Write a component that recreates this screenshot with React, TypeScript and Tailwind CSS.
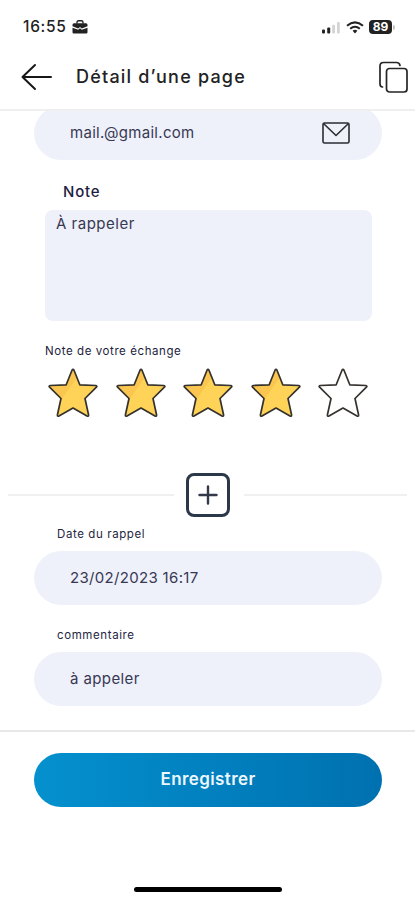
import React from 'react';

const STAR_PATH =
  'M24 2.2 Q25 0.6 26 2.2 L31.8 16.8 L47.8 17.500 Q49.600 18 48.400 19.200 L37 30.500 L40.600 47 Q40.600 48.800 39 48 L25 40 L11 48 Q9.400 48.800 9.400 47 L13 30.500 L1.600 19.200 Q0.400 18 2.200 17.500 L18.200 16.800 Z';

const Star: React.FC<{ filled: boolean }> = ({ filled }) => (
  <svg width="50" height="50" viewBox="0 0 50 50" fill="none">
    <path d={STAR_PATH} fill={filled ? '#fed358' : '#ffffff'} />
    {filled && <path d="M25 1.500 L28.500 10 L11 35 L13 30.500 L1.600 18.500 L18.200 16.800 Z" fill="#fbc650" />}
    <path d={STAR_PATH} stroke="#35322e" strokeWidth="1.7" strokeLinejoin="round" />
  </svg>
);

const StatusBar: React.FC = () => (
  <div className="flex h-[54px] items-center justify-between pl-[23px] pr-[20px]">
    <div className="flex items-center gap-[4px]">
      <span className="w-[45px] whitespace-nowrap text-[15.5px] font-medium tracking-[0.7px] text-[#222]">16:55</span>
      <svg width="16" height="14" viewBox="0 0 16 14" fill="#222">
        <path d="M5 3.5V2.3Q5 .8 6.5.8h3Q11 .8 11 2.3v1.2" fill="none" stroke="#222" strokeWidth="1.4" />
        <path d="M2 3.2h12q1.5 0 1.5 1.5v1.6L9.800 8.500 8 7 6.200 8.500.5 6.300V4.700Q.5 3.200 2 3.200Z" />
        <path d="M.5 7.700 6.200 9.700 8 8.300l1.800 1.400 5.700-2V12.200q0 1.300-1.300 1.300H1.800Q.5 13.500.5 12.200Z" />
      </svg>
    </div>
    <div className="flex items-center">
      <svg width="19" height="13" viewBox="0 0 19 13">
        <rect x="0" y="8.500" width="3" height="4" rx="1" fill="#222" />
        <rect x="5.200" y="6.500" width="3" height="6" rx="1" fill="#222" />
        <rect x="10.200" y="3.800" width="2.800" height="8.700" rx="1" fill="#d4d4d4" />
        <rect x="15" y="1" width="2.800" height="11.500" rx="1" fill="#d4d4d4" />
      </svg>
      <svg width="18" height="13" viewBox="0 0 18 13" fill="none" stroke="#222" strokeWidth="2" className="ml-[5px]">
        <path d="M1 4.700Q9-2 17 4.700" />
        <path d="M4.200 7.700Q9 3.800 13.800 7.700" />
        <path d="M6.600 9.700Q9 8 11.400 9.700L9 12.500Z" fill="#222" stroke="none" />
      </svg>
      <div className="ml-[5px] flex h-[14px] w-[23px] items-center justify-center rounded-[4px] bg-[#222] text-[12px] font-bold leading-none text-white">
        89
      </div>
      <div className="ml-px h-[5px] w-[2px] rounded-r-full bg-[#c4c4c4]" />
    </div>
  </div>
);

const Header: React.FC = () => (
  <header className="flex h-[57px] items-center border-b-2 border-[#efefef] pb-[10px] pl-[21px] pr-[7px]">
    <svg width="32" height="28" viewBox="0 0 32 28" fill="none" stroke="#171717" strokeWidth="2" strokeLinecap="round" strokeLinejoin="round">
      <path d="M30 14H1.500M14 2 1.500 14 14 26" />
    </svg>
    <h1 className="ml-[23px] flex-1 whitespace-nowrap text-[18px] font-medium leading-6 tracking-[1.2px] text-[#222]">Détail d’une page</h1>
    <svg width="30" height="34" viewBox="0 0 30 34" fill="none" stroke="#252525" strokeWidth="1.700" strokeLinecap="round">
      <path d="M4.500 27Q2 27 2 24V6Q2 2.500 5.500 2.500H18.500Q21.500 2.500 22 5.500" />
      <rect x="8.500" y="8.500" width="20.500" height="23.500" rx="3" />
    </svg>
  </header>
);

const Pill: React.FC<{ children: React.ReactNode }> = ({ children }) => (
  <div className="ml-[34px] mr-[33px] flex h-[54px] shrink-0 items-center justify-between rounded-full bg-[#eef1fa] pl-[36px] pr-[32px] text-[15px] text-[#383853]">
    {children}
  </div>
);

export default function App() {
  const rating = 4;

  return (
    <div className="flex h-[900px] w-[415px] flex-col overflow-hidden bg-white font-['Inter',sans-serif]">
      <StatusBar />
      <Header />

      {/* The first field is scrolled partly under the header */}
      <div className="flex h-[49px] flex-col justify-end overflow-hidden">
        <Pill>
          <span className="tracking-[0.3px]">mail.@gmail.com</span>
          <svg width="28" height="22" viewBox="0 0 28 22" fill="none" stroke="#2c2c33" strokeWidth="1.600" strokeLinejoin="round">
            <rect x="1" y="1" width="26" height="20" rx="1.500" />
            <path d="M1.500 1.500 14 13.500 26.500 1.500" />
          </svg>
        </Pill>
      </div>

      <label className="ml-[63px] mt-[22px] h-5 text-[15px] font-medium leading-5 tracking-[0.8px] text-[#1d1d40]">Note</label>
      <div className="ml-[45px] mr-[43px] mt-[8px] h-[111px] rounded-[8px] bg-[#eef1fa] px-[11px] pt-[4px] text-[15px] leading-5 tracking-[0.5px] text-[#383853]">
        À rappeler
      </div>

      <label className="ml-[45px] mt-[22px] h-4 text-[11.5px] leading-4 tracking-[0.58px] text-[#1d1d40]">Note de votre échange</label>
      <div className="mt-[9px] flex gap-[17.500px] pl-[48px]">
        {[1, 2, 3, 4, 5].map(n => (
          <Star key={n} filled={n <= rating} />
        ))}
      </div>

      <div className="mt-[55px] flex h-[44px] items-center px-2">
        <div className="h-[2px] w-[166px] bg-[#f0f0f1]" />
        <button className="ml-3 mr-[14px] flex h-[44px] w-[44px] items-center justify-center rounded-[8px] border-3 border-[#2b3849]">
          <svg width="20" height="20" viewBox="0 0 20 20" stroke="#34394a" strokeWidth="2.400" strokeLinecap="round" className="shrink-0">
            <path d="M1.500 10h17M10 1.500v17" />
          </svg>
        </button>
        <div className="h-[2px] flex-1 bg-[#f0f0f1]" />
      </div>

      <label className="ml-[57px] mt-[9px] h-4 text-[11.5px] leading-4 tracking-[0.6px] text-[#26263f]">Date du rappel</label>
      <div className="mt-[9px]">
        <Pill>
          <span className="tracking-[0.32px]">23/02/2023 16:17</span>
        </Pill>
      </div>

      <label className="ml-[57px] mt-[22px] h-4 text-[11.5px] leading-4 tracking-[0.6px] text-[#26263f]">commentaire</label>
      <div className="mt-[9px]">
        <Pill>
          <span className="tracking-[0.4px]">à appeler</span>
        </Pill>
      </div>

      <div className="mt-[24px] h-[2px] shrink-0 bg-[#e8e8e8]" />

      <button className="ml-[34px] mr-[33px] mt-[21px] h-[54px] shrink-0 rounded-full bg-linear-to-r from-[#0590ce] to-[#0071b0] text-[17px] font-semibold tracking-[0.4px] text-[#edf7fd]">
        Enregistrer
      </button>

      <div className="mx-auto mb-[8px] mt-auto h-[5px] w-[148px] rounded-full bg-black" />
    </div>
  );
}
